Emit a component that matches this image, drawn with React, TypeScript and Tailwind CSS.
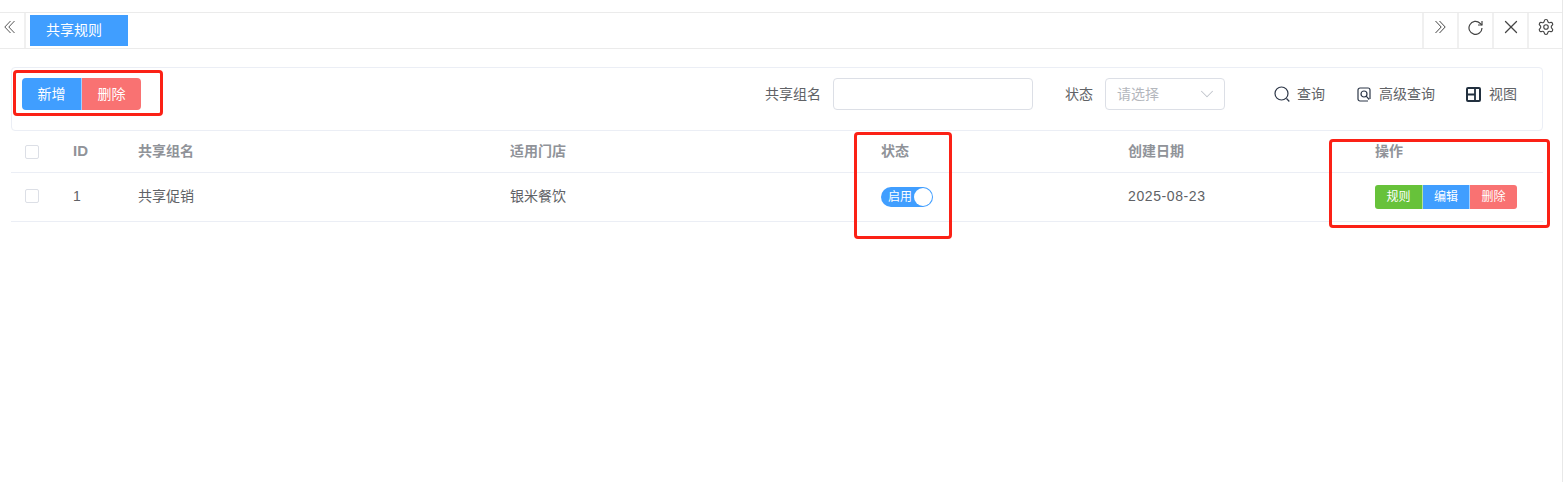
import { ChevronDown, X, Settings } from 'lucide-react'

const gridCols = 'grid grid-cols-[48px_65px_372px_371px_247px_247px_182px]'
const font = { fontFamily: '"Liberation Sans", "Noto Sans CJK SC", sans-serif' }

function RedBox({ className }: { className: string }) {
  return <div className={`absolute border-[3px] border-[#fb2116] rounded-[4px] pointer-events-none ${className}`} />
}

function Checkbox() {
  return <span className="block w-[14px] h-[14px] border border-[#dcdfe6] rounded-[2px] bg-white" />
}

function TabTool({ children }: { children: React.ReactNode }) {
  return (
    <div className="w-[35px] h-full flex items-center justify-center border-l-2 border-[#f0f0f0] text-[#444] pb-[7px]">
      {children}
    </div>
  )
}

export default function App() {
  return (
    <div className="relative w-[1567px] h-[482px] bg-white overflow-hidden" style={font}>
      <div className="w-[1563px] h-full border-r border-[#e8e8e8]">
        <div className="h-3" />

        {/* Tab bar */}
        <div className="h-[37px] border-y border-[#ebebeb] flex">
          <div className="w-[26px] h-full border-r-2 border-[#f0f0f0] pl-[4px] pt-[7px] text-[#555]">
            <svg width="11" height="14" viewBox="0 0 11 14" fill="none" stroke="currentColor" strokeWidth="1">
              <path d="M6.5 1L.8 7l5.7 6M10.5 1L4.8 7l5.7 6" />
            </svg>
          </div>
          <div className="ml-[4px] mt-[2px] w-[98px] h-[31px] bg-[#409eff] text-white text-[14px] pl-[16px] flex items-center">
            共享规则
          </div>
          <div className="flex-1" />
          <div className="flex h-full">
            <TabTool>
              <svg width="11" height="14" viewBox="0 0 11 14" fill="none" stroke="currentColor" strokeWidth="1">
                <path d="M.5 1l5.7 6-5.7 6M4.5 1l5.7 6-5.7 6" />
              </svg>
            </TabTool>
            <TabTool>
              <svg width="15" height="15" viewBox="0 0 15 15" fill="none" stroke="currentColor" strokeWidth="1.2">
                <path d="M14 8a6.5 6.5 0 1 1-2-4.8L14 5" />
                <path d="M14 1v4h-4" />
              </svg>
            </TabTool>
            <TabTool><X size={22} strokeWidth={1.4} /></TabTool>
            <TabTool><Settings size={18} strokeWidth={1.5} /></TabTool>
          </div>
        </div>

        {/* Search panel */}
        <div className="mt-[18px] ml-[11px] w-[1532px] h-[64px] border border-[#ebeef5] rounded-[4px] flex items-start pt-[10px] pl-[10px] pr-[25px] text-[14px] text-[#606266]">
          <div className="flex h-[32px] text-white rounded-[4px] overflow-hidden">
            <div className="w-[60px] bg-[#409eff] flex items-center justify-center border-r border-[#a0cfff]">新增</div>
            <div className="w-[59px] bg-[#f97272] flex items-center justify-center">删除</div>
          </div>
          <div className="flex-1" />
          <span className="h-[32px] flex items-center">共享组名</span>
          <div className="ml-[12px] w-[200px] h-[32px] border border-[#dcdfe6] rounded-[4px] bg-white" />
          <span className="ml-[32px] h-[32px] flex items-center">状态</span>
          <div className="ml-[12px] w-[120px] h-[32px] border border-[#dcdfe6] rounded-[4px] flex items-center justify-between pl-[11px] pr-[6px] text-[#b4b7bd]">
            <span>请选择</span>
            <ChevronDown size={22} strokeWidth={1.1} className="text-[#c0c4cc]" />
          </div>
          <div className="ml-[49px] h-[32px] flex items-center gap-[7px]">
            <svg width="16" height="17" viewBox="0 0 16 17" fill="none" stroke="#2d3748" strokeWidth="1.2">
              <circle cx="7.5" cy="7.5" r="6.5" />
              <path d="M12.5 12.5l2.8 3" />
            </svg>
            <span>查询</span>
          </div>
          <div className="ml-[32px] h-[32px] flex items-center gap-[8px]">
            <svg width="14" height="15" viewBox="0 0 14 15" fill="none" stroke="#2d3748" strokeWidth="1.2">
              <path d="M11 14H3a2 2 0 0 1-2-2V3a2 2 0 0 1 2-2h8a2 2 0 0 1 2 2v9" />
              <circle cx="7" cy="7" r="3" />
              <path d="M9.2 9.2l3 3.3" />
            </svg>
            <span>高级查询</span>
          </div>
          <div className="ml-[31px] h-[32px] flex items-center gap-[8px]">
            <svg width="15" height="15" viewBox="0 0 15 15" fill="none" stroke="#22303f" strokeWidth="2">
              <rect x="1" y="1" width="13" height="13" rx="1" />
              <path d="M9 1v13M1 7.5h8" strokeWidth="1.8" />
            </svg>
            <span>视图</span>
          </div>
        </div>

        {/* Table */}
        <div className="ml-[11px] w-[1532px] text-[14px]">
          <div className={`${gridCols} h-[42px] items-center border-b border-[#ebeef5] font-bold text-[#909399]`}>
            <div className="pl-[14px]"><Checkbox /></div>
            <div className="pl-[14px] text-[15px]">ID</div>
            <div className="pl-[14px]">共享组名</div>
            <div className="pl-[14px]">适用门店</div>
            <div className="pl-[14px]">状态</div>
            <div className="pl-[14px]">创建日期</div>
            <div className="pl-[14px]">操作</div>
          </div>
          <div className={`${gridCols} h-[49px] items-center border-b border-[#ebeef5] text-[#606266] pb-[2px]`}>
            <div className="pl-[14px]"><Checkbox /></div>
            <div className="pl-[14px]">1</div>
            <div className="pl-[14px]">共享促销</div>
            <div className="pl-[14px]">银米餐饮</div>
            <div className="pl-[14px] mt-[2px]">
              <div className="w-[52px] h-[20px] rounded-full bg-[#409eff] flex items-center justify-between pl-[7px] pr-[1px] text-white text-[12px]">
                <span>启用</span>
                <span className="w-[18px] h-[18px] rounded-full bg-white" />
              </div>
            </div>
            <div className="pl-[14px] tracking-[0.6px]">2025-08-23</div>
            <div className="pl-[14px] mt-[2px]">
              <div className="flex w-[142px] h-[24px] rounded-[3px] overflow-hidden text-white text-[12px]">
                <div className="w-[48px] bg-[#67c23a] flex items-center justify-center border-r border-[#b3e19d]">规则</div>
                <div className="w-[47px] bg-[#409eff] flex items-center justify-center border-r border-[#a0cfff]">编辑</div>
                <div className="w-[47px] bg-[#f97272] flex items-center justify-center">删除</div>
              </div>
            </div>
          </div>
        </div>
      </div>

      {/* Red annotation boxes */}
      <RedBox className="left-[13px] top-[70px] w-[150px] h-[46px]" />
      <RedBox className="left-[854px] top-[132px] w-[98px] h-[107px]" />
      <RedBox className="left-[1329px] top-[139px] w-[221px] h-[89px]" />
    </div>
  )
}
